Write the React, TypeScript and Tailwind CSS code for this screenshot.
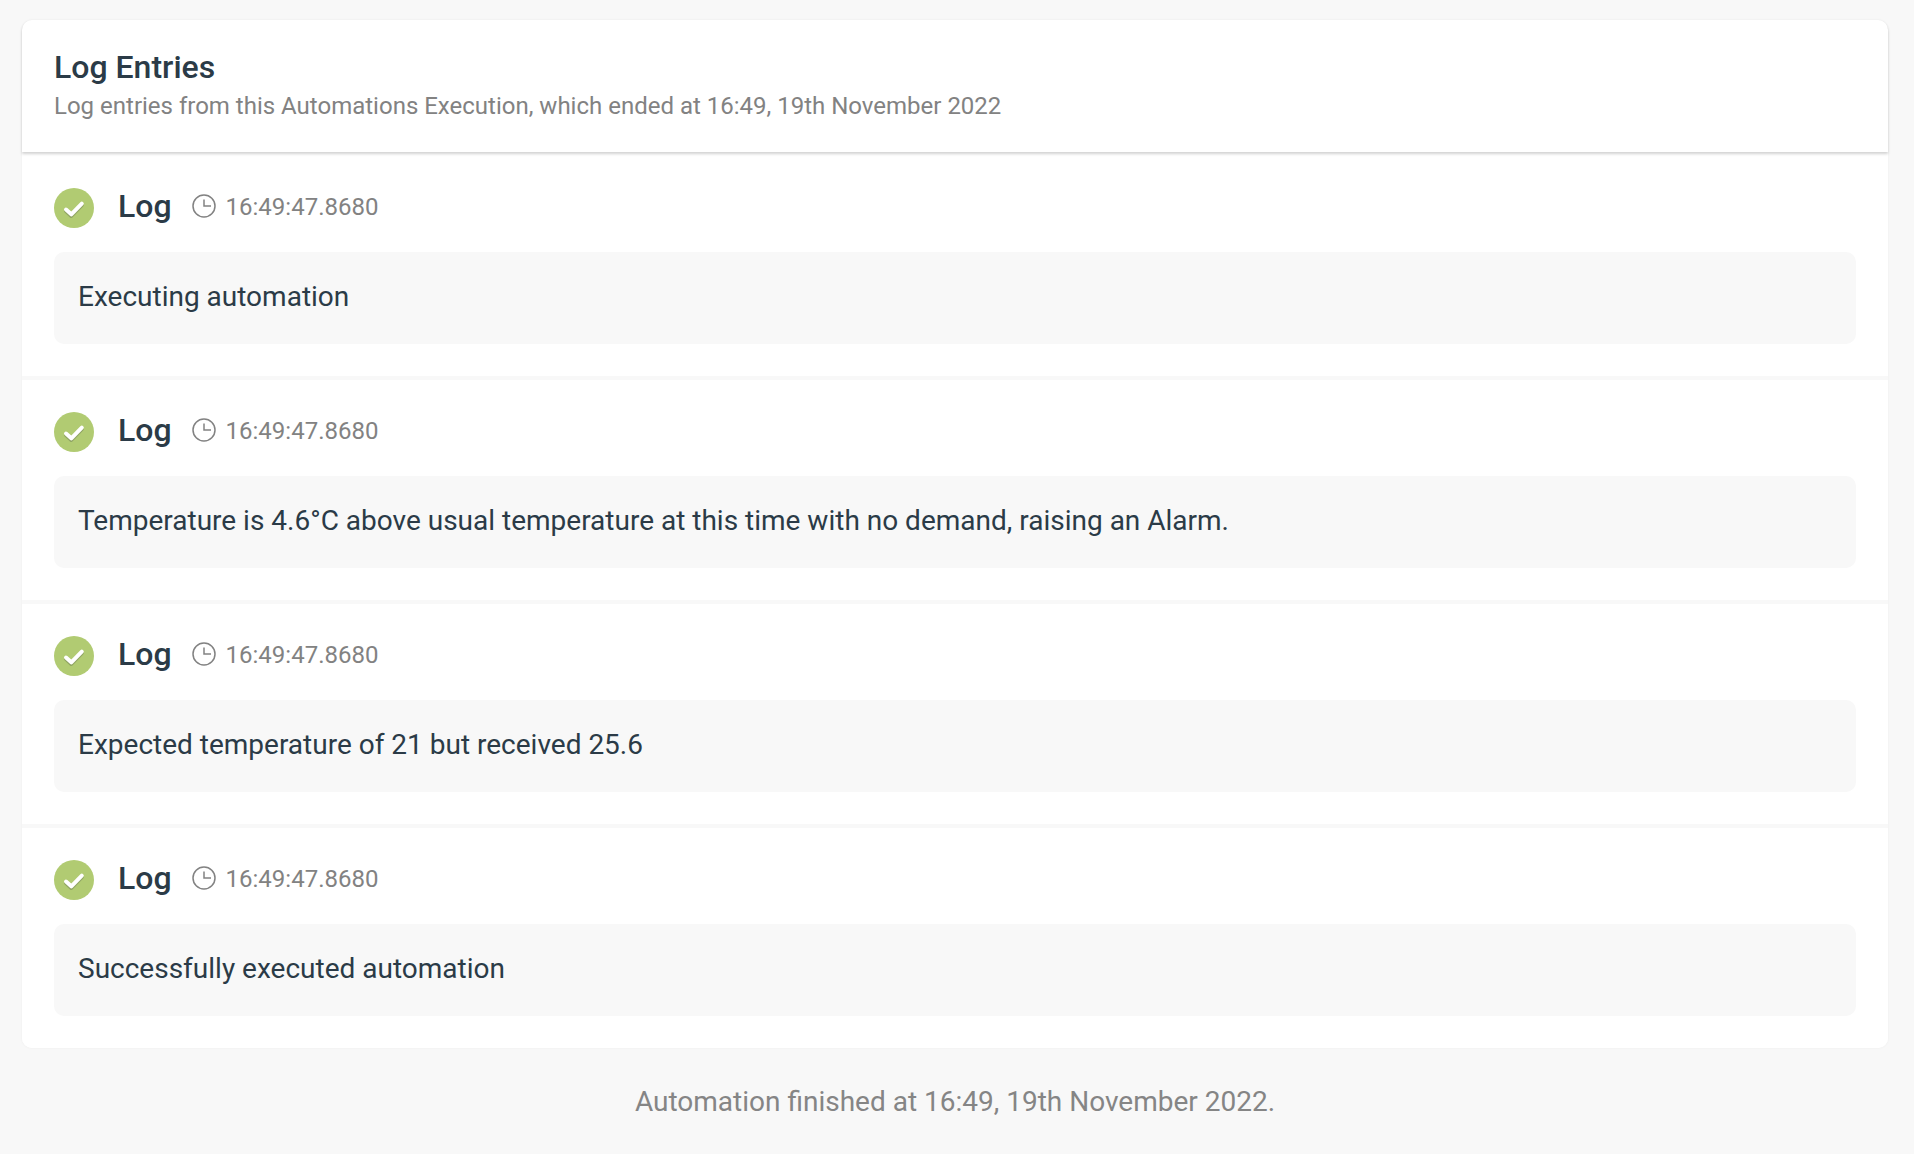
import React from 'react';

const entries = [
  'Executing automation',
  'Temperature is 4.6°C above usual temperature at this time with no demand, raising an Alarm.',
  'Expected temperature of 21 but received 25.6',
  'Successfully executed automation',
];

const CheckBadge = () => (
  <svg width="40" height="40" viewBox="0 0 40 40" className="shrink-0">
    <circle cx="20" cy="20" r="20" fill="#b1cb72" />
    <path d="M12 21.5L17.3 26.3 27.8 15.6" fill="none" stroke="#8fa463" strokeWidth="4" strokeLinecap="round" strokeLinejoin="round" transform="translate(0 1.6)" />
    <path d="M12 21.5L17.3 26.3 27.8 15.6" fill="none" stroke="#ffffff" strokeWidth="4" strokeLinecap="round" strokeLinejoin="round" />
  </svg>
);

const ClockIcon = () => (
  <svg width="24" height="24" viewBox="0 0 24 24" fill="none" stroke="#828282" strokeWidth="1.5" className="shrink-0">
    <circle cx="12" cy="12" r="11" />
    <path d="M12 5.5V12H19" />
  </svg>
);

export default function App() {
  return (
    <div className="h-[1154px] bg-[#f8f8f8] pl-[22px] pr-[26px] pt-[20px] font-['Roboto',sans-serif] overflow-hidden">
      <div className="bg-white rounded-[10px] shadow-[0_0_3px_rgba(0,0,0,0.05)]">
        <div className="relative h-[132px] px-[32px] pt-[28px] rounded-t-[10px] shadow-[0_2px_3px_rgba(0,0,0,0.18)]">
          <h1 className="text-[32px] leading-[38px] font-medium text-[#2b3b47]">Log Entries</h1>
          <p className="text-[24px] leading-[30px] mt-[5px] text-[#828282]">
            Log entries from this Automations Execution, which ended at 16:49, 19th November 2022
          </p>
        </div>
        <div className="flex flex-col gap-[4px] bg-[#f8f8f8] rounded-b-[10px]">
          {entries.map((text, i) => (
            <div key={i} className={`bg-white px-[32px] pb-[32px] ${i === 0 ? 'pt-[36px]' : 'pt-[32px]'} ${i === 3 ? 'rounded-b-[10px]' : ''}`}>
              <div className="flex items-center h-[40px]">
                <CheckBadge />
                <span className="ml-[24px] mb-[4px] text-[32px] leading-[40px] font-medium text-[#2b3b47]">Log</span>
                <span className="ml-[20px] mb-[4px]"><ClockIcon /></span>
                <span className="ml-[10px] mb-[2px] text-[24px] text-[#828282]">16:49:47.8680</span>
              </div>
              <div className="mt-[24px] h-[92px] flex items-center px-[24px] pb-[2px] bg-[#f8f8f8] rounded-[10px] text-[28px] text-[#2b3b47]">
                {text}
              </div>
            </div>
          ))}
        </div>
      </div>
      <p className="mt-[33px] text-center text-[28px] text-[#858585]">
        Automation finished at 16:49, 19th November 2022.
      </p>
    </div>
  );
}
